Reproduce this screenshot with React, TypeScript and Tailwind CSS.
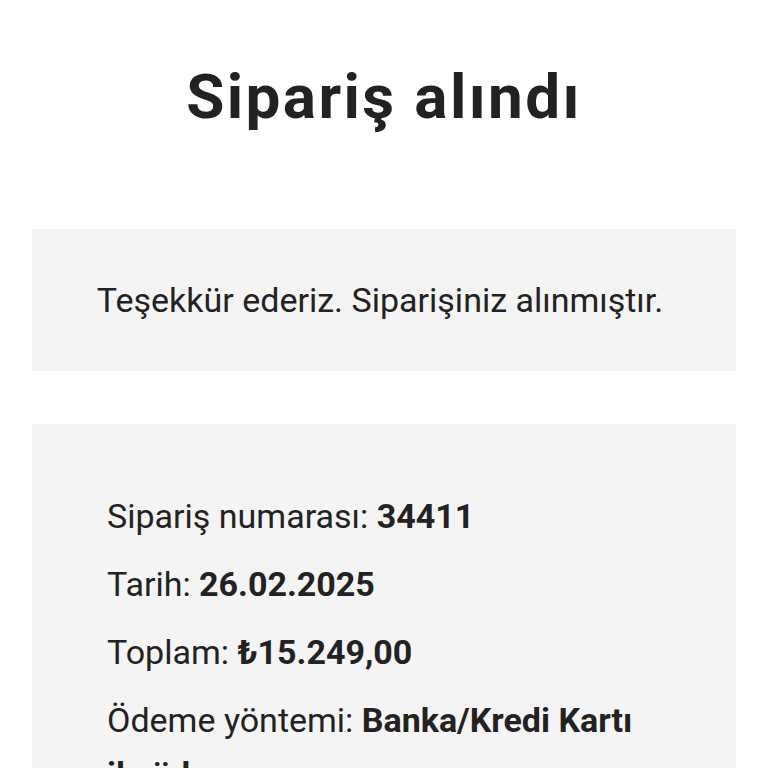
import React from 'react';

// Order received page
const details = [
  { label: 'Sipariş numarası:', value: '34411' },
  { label: 'Tarih:', value: '26.02.2025' },
  { label: 'Toplam:', value: '₺15.249,00' },
  { label: 'Ödeme yöntemi:', value: 'Banka/Kredi Kartı ile ödeme' },
];

const App = () => {
  return (
    <div className="min-h-screen bg-white text-[#222222] font-['Roboto',sans-serif]">
      <div className="px-8 pt-[60px] pb-16">
        <h1 className="text-center text-[62px] leading-[1.2] font-bold tracking-[2.4px]">Sipariş alındı</h1>

        <div className="mt-[95px] bg-[#f4f4f4] py-[47px] pl-8 pr-[40px]">
          <p className="text-center text-[34px] leading-[48px]">
            Teşekkür ederiz. Siparişiniz alınmıştır.
          </p>
        </div>

        <div className="mt-[53px] bg-[#f4f4f4] pt-[65px] pb-12 px-[75px]">
          <ul className="flex flex-col gap-[14px]">
            {details.map((d) => (
              <li key={d.label} className="text-[34px] leading-[54px]">
                {d.label} <strong className="font-bold">{d.value}</strong>
              </li>
            ))}
          </ul>
        </div>
      </div>
    </div>
  );
};

export default App;
